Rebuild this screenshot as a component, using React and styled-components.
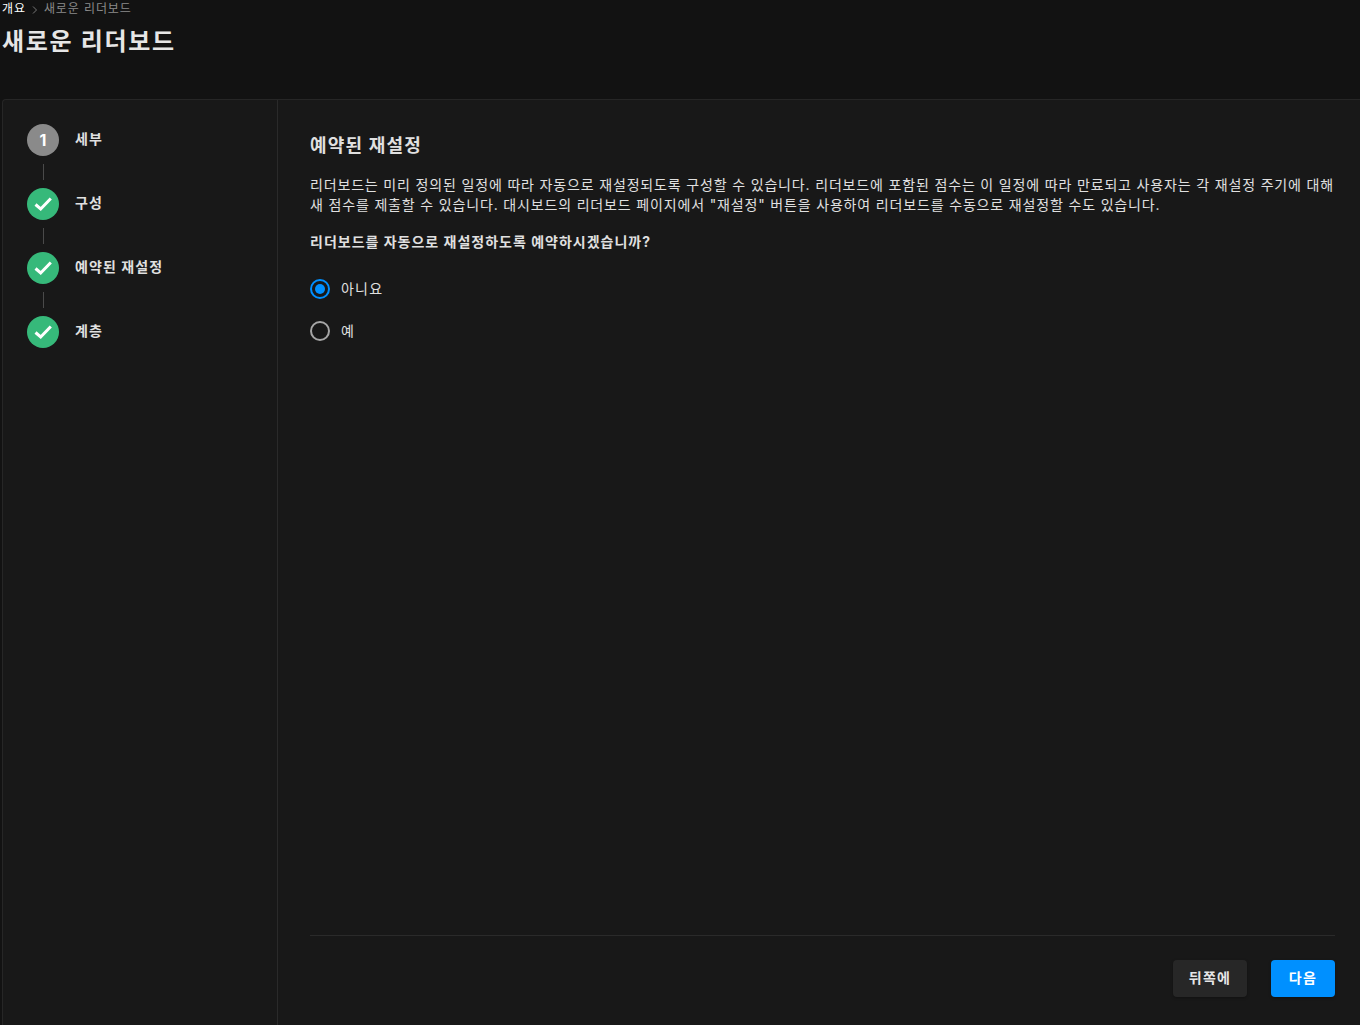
import React from "react";
import styled, { createGlobalStyle } from "styled-components";

const Global = createGlobalStyle`
  html, body { margin: 0; padding: 0; background: #121212; }
  body {
    font-family: "Inter", "Noto Sans CJK KR", sans-serif;
    color: #e6e6e6;
    overflow: hidden;
    letter-spacing: 0.066em;
  }
  * { box-sizing: border-box; }
`;

const Page = styled.div`
  width: 1360px;
  height: 1025px;
  display: flex;
  flex-direction: column;
  padding-left: 2px;
  overflow: hidden;
`;

const Header = styled.header`
  height: 99px;
  flex: none;
  padding-top: 1px;
`;

const Crumbs = styled.nav`
  display: flex;
  align-items: center;
  height: 16px;
  font-size: 12px;
  line-height: 16px;
  letter-spacing: 0.9px;
`;

const CrumbLink = styled.span`
  color: #ffffff;
`;

const CrumbSep = styled.svg`
  width: 7px;
  height: 8px;
  margin: 1px 6px 0 5px;
  color: #777;
`;

const CrumbCurrent = styled.span`
  color: #8a8a8a;
`;

const Title = styled.h1`
  margin: 9px 0 0;
  font-size: 24px;
  line-height: 32px;
  font-weight: 700;
  letter-spacing: 1.7px;
  color: #e6e6e6;
`;

const Card = styled.main`
  flex: 1;
  display: flex;
  background: #181818;
  border: 1px solid #262626;
  border-right: none;
  border-bottom: none;
  border-top-left-radius: 4px;
  min-height: 0;
`;

const Sidebar = styled.aside`
  width: 275px;
  flex: none;
  padding: 24px 24px 0;
  border-right: 1px solid #2a2a2a;
`;

const Step = styled.div`
  display: flex;
  align-items: center;
  gap: 16px;
  height: 32px;
`;

const StepCircle = styled.div`
  width: 32px;
  height: 32px;
  border-radius: 50%;
  display: flex;
  align-items: center;
  justify-content: center;
  background: ${p => (p.$done ? "#36b97a" : "#8a8a8a")};
  color: #fff;
  font-size: 16px;
  font-weight: 700;
  letter-spacing: 0;
  flex: none;
`;

const StepLabel = styled.span`
  font-size: 14px;
  line-height: 16px;
  font-weight: 700;
  color: #e0e0e0;
  letter-spacing: 1.1px;
  position: relative;
  top: -1px;
`;

const Connector = styled.div`
  width: 1px;
  height: 16px;
  margin: 8px 0 8px 16px;
  background: #4a4a4a;
`;

const Content = styled.section`
  flex: 1;
  display: flex;
  flex-direction: column;
  padding: 34px 25px 28px 32px;
  min-width: 0;
`;

const Body = styled.div`
  flex: 1;
`;

const SectionTitle = styled.h2`
  margin: 0;
  font-size: 18px;
  line-height: 24px;
  font-weight: 700;
  letter-spacing: 1.2px;
  color: #e0e0e0;
`;

const Paragraph = styled.p`
  margin: 17px 0 0;
  font-size: 14px;
  line-height: 20px;
  letter-spacing: 0.835px;
  color: #e0e0e0;
`;

const Question = styled.p`
  margin: 17px 0 0;
  font-size: 14px;
  line-height: 20px;
  font-weight: 700;
  letter-spacing: 1px;
  color: #e0e0e0;
`;

const RadioList = styled.div`
  margin-top: 27px;
  display: flex;
  flex-direction: column;
  gap: 22px;
`;

const RadioRow = styled.label`
  display: flex;
  align-items: center;
  gap: 11px;
  height: 20px;
  font-size: 14px;
  letter-spacing: 1.2px;
  color: #e0e0e0;
`;

const RadioText = styled.span`
  position: relative;
  top: -1px;
`;

const RadioMark = styled.span`
  width: 20px;
  height: 20px;
  border-radius: 50%;
  border: 2px solid ${p => (p.$checked ? "#0090ff" : "#a6a6a6")};
  display: flex;
  align-items: center;
  justify-content: center;
  flex: none;
  &::after {
    content: "";
    display: ${p => (p.$checked ? "block" : "none")};
    width: 10px;
    height: 10px;
    border-radius: 50%;
    background: #0090ff;
  }
`;

const Footer = styled.footer`
  border-top: 1px solid #2a2a2a;
  padding-top: 24px;
  display: flex;
  justify-content: flex-end;
  gap: 24px;
`;

const Button = styled.button`
  height: 37px;
  width: ${p => (p.$primary ? "64px" : "74px")};
  border: none;
  border-radius: 4px;
  padding: 0 0 2px;
  background: ${p => (p.$primary ? "#0090ff" : "#272727")};
  color: ${p => (p.$primary ? "#ffffff" : "#e6e6e6")};
  font-family: inherit;
  font-size: 14px;
  font-weight: 700;
  line-height: 20px;
  letter-spacing: 1.3px;
  box-shadow: 0 1px 3px rgba(0, 0, 0, 0.3);
`;

const Check = () => (
  <svg width="22" height="22" viewBox="0 0 22 22" fill="none" stroke="#fff" strokeWidth="3" strokeLinecap="butt">
    <path d="M3.5 11.5 L8.7 16 L18.8 5.5" />
  </svg>
);

const steps = [
  { label: "세부", done: false },
  { label: "구성", done: true },
  { label: "예약된 재설정", done: true },
  { label: "계층", done: true },
];

export default function App() {
  return (
    <>
      <Global />
      <Page>
        <Header>
          <Crumbs>
            <CrumbLink>개요</CrumbLink>
            <CrumbSep viewBox="0 0 7 8" fill="none" stroke="currentColor" strokeWidth="1">
              <path d="M2 0.5 L5.5 4 L2 7.5" />
            </CrumbSep>
            <CrumbCurrent>새로운 리더보드</CrumbCurrent>
          </Crumbs>
          <Title>새로운 리더보드</Title>
        </Header>
        <Card>
          <Sidebar>
            {steps.map((s, i) => (
              <React.Fragment key={s.label}>
                <Step>
                  <StepCircle $done={s.done}>{s.done ? <Check /> : "1"}</StepCircle>
                  <StepLabel>{s.label}</StepLabel>
                </Step>
                {i < steps.length - 1 && <Connector />}
              </React.Fragment>
            ))}
          </Sidebar>
          <Content>
            <Body>
              <SectionTitle>예약된 재설정</SectionTitle>
              <Paragraph>
                리더보드는 미리 정의된 일정에 따라 자동으로 재설정되도록 구성할 수 있습니다. 리더보드에 포함된 점수는 이 일정에 따라 만료되고 사용자는 각 재설정 주기에 대해 새 점수를 제출할 수 있습니다. 대시보드의 리더보드 페이지에서 "재설정" 버튼을 사용하여 리더보드를 수동으로 재설정할 수도 있습니다.
              </Paragraph>
              <Question>리더보드를 자동으로 재설정하도록 예약하시겠습니까?</Question>
              <RadioList>
                <RadioRow>
                  <RadioMark $checked />
                  <RadioText>아니요</RadioText>
                </RadioRow>
                <RadioRow>
                  <RadioMark />
                  <RadioText>예</RadioText>
                </RadioRow>
              </RadioList>
            </Body>
            <Footer>
              <Button>뒤쪽에</Button>
              <Button $primary>다음</Button>
            </Footer>
          </Content>
        </Card>
      </Page>
    </>
  );
}
